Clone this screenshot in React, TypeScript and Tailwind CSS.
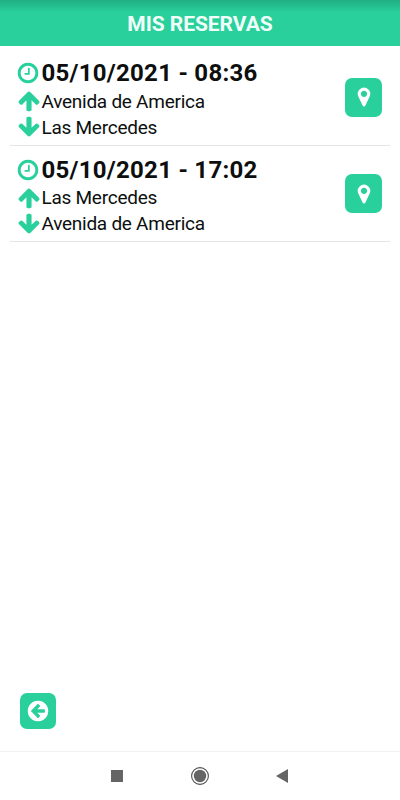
type IconProps = { d: string; size?: number; className?: string };

const icons = {
  clock:
    'M1024 544v448q0 14-9 23t-23 9h-320q-14 0-23-9t-9-23v-64q0-14 9-23t23-9h224v-352q0-14 9-23t23-9h64q14 0 23 9t9 23zm416 352q0-148-73-273t-198-198-273-73-273 73-198 198-73 273 73 273 198 198 273 73 273-73 198-198 73-273zm224 0q0 209-103 385.5t-279.5 279.5-385.5 103-385.5-103-279.5-279.5-103-385.5 103-385.5 279.5-279.5 385.5-103 385.5 103 279.5 279.5 103 385.5z',
  arrowUp:
    'M1675 971q0 51-37 90l-75 75q-38 38-91 38-54 0-90-38l-294-293v704q0 52-37.5 84.5t-90.5 32.5h-128q-53 0-90.5-32.5t-37.5-84.5v-704l-294 293q-36 38-90 38t-90-38l-75-75q-38-38-38-90 0-53 38-91l651-651q35-37 90-37 54 0 91 37l651 651q37 39 37 91z',
  arrowDown:
    'M1675 832q0 53-37 90l-651 652q-39 37-91 37-53 0-90-37l-651-652q-38-36-38-90 0-53 38-91l74-75q39-37 91-37 53 0 90 37l294 294v-704q0-52 38-90t90-38h128q52 0 90 38t38 90v704l294-294q37-37 90-37 52 0 91 37l75 75q37 39 37 91z',
  marker:
    'M1152 640q0-106-75-181t-181-75-181 75-75 181 75 181 181 75 181-75 75-181zm256 0q0 109-33 179l-364 774q-16 33-47.5 52t-67.5 19-67.5-19-46.5-52l-365-774q-33-70-33-179 0-212 150-362t362-150 362 150 150 362z',
  circleLeft:
    'M1408 960v-128q0-26-19-45t-45-19h-502l189-189q19-19 19-45t-19-45l-91-91q-18-18-45-18t-45 18l-362 362-91 91q-18 18-18 45t18 45l91 91 362 362q18 18 45 18t45-18l91-91q18-18 18-45t-18-45l-189-189h502q26 0 45-19t19-45zm256-64q0 209-103 385.5t-279.5 279.5-385.5 103-385.5-103-279.5-279.5-103-385.5 103-385.5 279.5-279.5 385.5-103 385.5 103 279.5 279.5 103 385.5z',
};

const Icon = ({ d, size = 24, className }: IconProps) => (
  <svg width={size} height={size} viewBox="0 0 1792 1792" fill="currentColor" className={className}>
    <path d={d} />
  </svg>
);

const bookings = [
  { id: 1, date: '05/10/2021 - 08:36', from: 'Avenida de America', to: 'Las Mercedes' },
  { id: 2, date: '05/10/2021 - 17:02', from: 'Las Mercedes', to: 'Avenida de America' },
];

export default function App() {
  return (
    <div className="flex h-[800px] w-[400px] flex-col overflow-hidden bg-white font-['Roboto',sans-serif] text-[#0c0f0e]">
      <header className="flex h-[46px] shrink-0 items-center justify-center bg-[#29d09b] bg-linear-to-b from-[#20ae82] to-[#29d09b] to-[12px] pt-0.5">
        <h1 className="text-[21px] font-bold leading-6 tracking-[-0.05px] text-[#f0fffa]">MIS RESERVAS</h1>
      </header>

      {/* Bookings */}
      <main className="flex-1 px-2.5 pt-[3.6px]">
        {bookings.map((b) => (
          <div key={b.id} className="flex h-[96.4px] items-center justify-between border-b border-[#e4e4e4] pl-1.5 pr-2">
            <div className="pt-1">
              <div className="flex h-[30px] items-center text-[#29d09b]">
                <Icon d={icons.clock} />
                <span className="ml-[1.5px] text-[24px] font-bold leading-[30px] tracking-[0.27px] text-[#0c0f0e]">{b.date}</span>
              </div>
              <div className="flex h-[26px] items-center text-[#29d09b]">
                <Icon d={icons.arrowUp} className="ml-[0.5px]" />
                <span className="ml-px pt-px text-[19px] leading-[26px] tracking-[-0.26px] text-[#0c0f0e]">{b.from}</span>
              </div>
              <div className="flex h-[26px] items-center text-[#29d09b]">
                <Icon d={icons.arrowDown} className="ml-[0.5px]" />
                <span className="ml-px pt-px text-[19px] leading-[26px] tracking-[-0.26px] text-[#0c0f0e]">{b.to}</span>
              </div>
            </div>
            <button className="flex h-[39px] w-[37px] items-center justify-center rounded-[7px] bg-[#29d09b] text-white">
              <Icon d={icons.marker} size={22} />
            </button>
          </div>
        ))}
      </main>

      <div className="px-5 pb-[22px]">
        <button className="flex size-9 items-center justify-center rounded-[7px] bg-[#29d09b] text-white">
          <Icon d={icons.circleLeft} />
        </button>
      </div>

      {/* System navigation */}
      <nav className="flex h-[49px] shrink-0 items-center justify-between border-t border-[#f1f1f1] pl-[111px] pr-[112px]">
        <div className="size-3 bg-[#656565]" />
        <svg width="20" height="20" viewBox="0 0 20 20">
          <circle cx="10" cy="10" r="8.4" fill="none" stroke="#505050" strokeWidth="1.1" />
          <circle cx="10" cy="10" r="6.2" fill="#656565" />
        </svg>
        <svg width="12" height="14" viewBox="0 0 12 14">
          <path d="M0 7 12 0v14z" fill="#656565" />
        </svg>
      </nav>
    </div>
  );
}
